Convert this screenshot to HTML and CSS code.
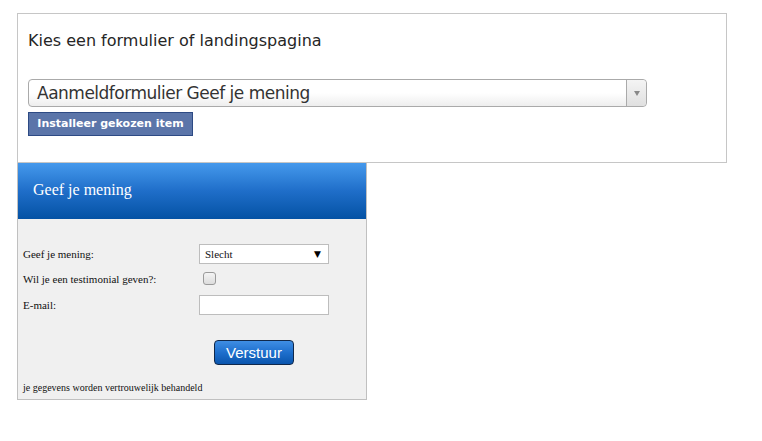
FILE: index.html
```html
<!DOCTYPE html>
<html lang="nl">
<head>
<meta charset="utf-8">
<title>Formulier</title>
<link rel="stylesheet" href="styles.css">
</head>
<body>
<div class="page">
  <section class="chooser">
    <h1 class="chooser-title">Kies een formulier of landingspagina</h1>
    <div class="combo">
      <span class="combo-text">Aanmeldformulier Geef je mening</span>
      <span class="combo-arrow"><span class="tri"></span></span>
    </div>
    <button class="install">Installeer gekozen item</button>
  </section>
  <section class="form">
    <header class="form-head">Geef je mening</header>
    <div class="form-body">
      <div class="row r1">
        <label class="lbl">Geef je mening:</label>
        <div class="fake-select"><span>Slecht</span><span class="sel-arrow">▼</span></div>
      </div>
      <div class="row r2">
        <label class="lbl">Wil je een testimonial geven?:</label>
        <span class="check"></span>
      </div>
      <div class="row r3">
        <label class="lbl">E-mail:</label>
        <span class="input"></span>
      </div>
      <div class="actions"><button class="submit">Verstuur</button></div>
      <p class="note">je gegevens worden vertrouwelijk behandeld</p>
    </div>
  </section>
</div>
</body>
</html>
```
FILE: styles.css
```css
html, body { margin: 0; padding: 0; background: #fff; }
.page { padding: 13px 0 0 17px; }

.chooser {
  width: 688px;
  height: 131px;
  border: 1px solid #c6c6c6;
  padding: 17px 10px 0 10px;
}
.chooser-title {
  margin: 0;
  font: normal 16px/19px "DejaVu Sans", Verdana, sans-serif;
  color: #262626;
}
.combo {
  margin-top: 29px;
  width: 617px;
  height: 26px;
  border: 1px solid #aaa;
  border-radius: 4px;
  background: linear-gradient(#ffffff 0%, #ffffff 50%, #eeeeee 100%);
  display: flex;
  align-items: center;
}
.combo-text {
  flex: 1;
  padding-left: 8px;
  font: normal 17px/26px "DejaVu Sans", Verdana, sans-serif;
  letter-spacing: -0.5px;
  color: #333;
}
.combo-arrow {
  width: 19px;
  height: 26px;
  border-left: 1px solid #aaa;
  border-radius: 0 4px 4px 0;
  background: linear-gradient(#f4f4f4, #e0e0e0);
  display: flex;
  align-items: center;
  justify-content: center;
}
.tri {
  width: 0; height: 0;
  border-left: 3px solid transparent;
  border-right: 3px solid transparent;
  border-top: 5px solid #888;
}
.install {
  display: block;
  margin-top: 5px;
  width: 165px;
  height: 24px;
  padding: 0;
  background: #5b75a9;
  border: 1px solid #2d4a84;
  color: #fff;
  font: bold 11px/20px "DejaVu Sans", Verdana, sans-serif;
}

.form {
  width: 348px;
  border: 1px solid #c0c0c0;
  border-top: 0;
  background: #f0f0f0;
}
.form-head {
  height: 56px;
  background: linear-gradient(#4599ec 0%, #1f6ec9 50%, #0452a4 100%);
  color: #fff;
  font: normal 16px/54px "Liberation Serif", "Times New Roman", serif;
  padding-left: 15px;
}
.form-body {
  padding: 25px 0 4px 5px;
  font: normal 11px/14px "Liberation Serif", "Times New Roman", serif;
  color: #111;
}
.row { display: flex; align-items: center; }
.lbl { width: 176px; }
.r1 { height: 20px; margin-bottom: 8px; }
.r2 { height: 13px; margin-bottom: 10px; }
.r3 { height: 20px; }
.fake-select {
  box-sizing: border-box;
  width: 130px;
  height: 20px;
  border: 1px solid #bdbdbd;
  background: #fff;
  display: flex;
  align-items: center;
  justify-content: space-between;
  padding: 0 7px 0 5px;
}
.sel-arrow { font-size: 9px; color: #000; font-family: "DejaVu Sans", sans-serif; }
.check {
  margin-left: 4px;
  width: 11px;
  height: 11px;
  border: 1px solid #9a9a9a;
  border-radius: 3px;
  background: linear-gradient(#f4f4f4, #dcdcdc);
}
.input {
  width: 128px;
  height: 18px;
  border: 1px solid #bdbdbd;
  background: #fff;
}
.actions { margin-top: 25px; padding-left: 191px; }
.submit {
  display: block;
  width: 80px;
  height: 25px;
  padding: 0;
  border: 1px solid #10284a;
  border-radius: 4px;
  background: linear-gradient(#3f8ee4 0%, #1e6fcd 50%, #0a55ad 100%);
  color: #fff;
  font: normal 15px/22px "Liberation Sans", Arial, sans-serif;
}
.note { margin: 16px 0 0 0; font-size: 10px; line-height: 14px; }
```
